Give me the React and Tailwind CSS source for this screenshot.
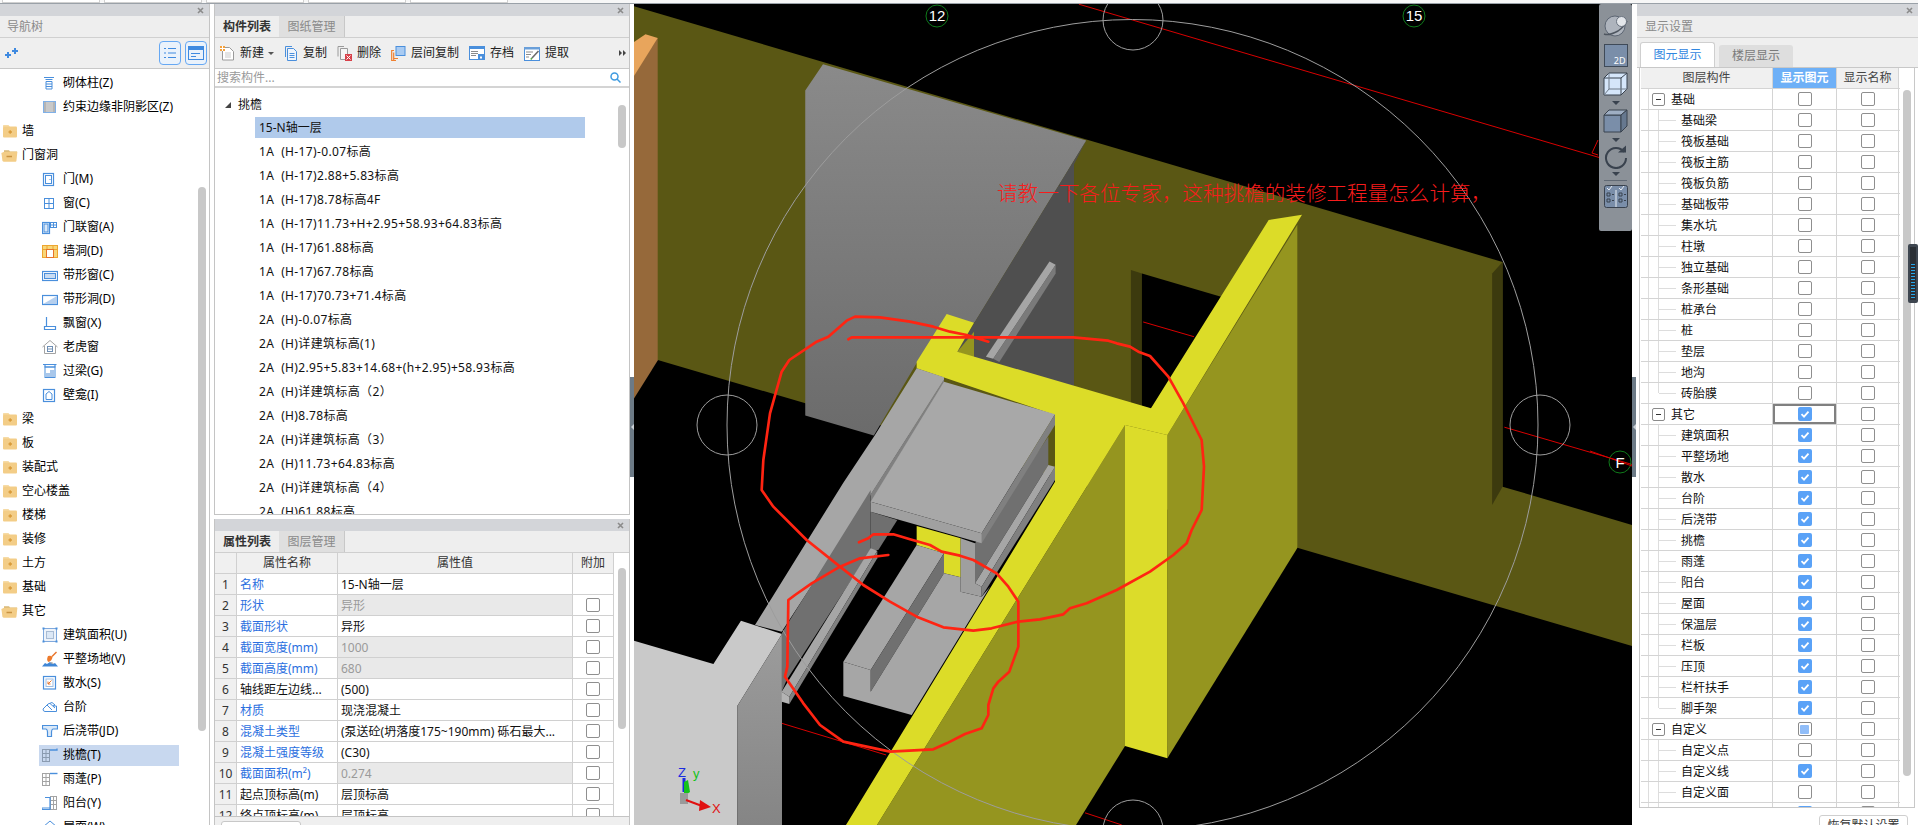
import React from 'react';

const B = '#4a8fdc';
const G = '#a3a3a3';

const FolderClosed = () => (
  <svg width="16" height="14" viewBox="0 0 16 14" className="shrink-0">
    <path d="M1 3 L1 1.5 Q1 1 1.6 1 L6.5 1 L8 3 Z" fill="#f6dba6" />
    <rect x="1" y="2.5" width="14" height="11" rx="1" fill="#f3cd87" />
    <path d="M6.5 8 H10 M8.2 6.2 V9.8" stroke="#d99a3a" strokeWidth="1.4" />
  </svg>
);

const FolderOpen = () => (
  <svg width="17" height="13" viewBox="0 0 17 13" className="shrink-0">
    <path d="M3 3 V1.2 H8 L9 2.4 H16 V3 Z" fill="#d9b877" />
    <path d="M3.2 2.8 H16.4 L15.4 12 Q15.3 12.8 14.5 12.8 H3 Q1.8 12.8 1.4 11.8 L0.4 4 Z" fill="#f3cd87" />
    <path d="M5.5 7.5 H11" stroke="#c99341" strokeWidth="1.5" />
  </svg>
);

const TreeIcon = ({ name }) => {
  const common = { width: 16, height: 16, viewBox: '0 0 16 16', fill: 'none', stroke: B, strokeWidth: 1, className: 'shrink-0' };
  switch (name) {
    case 'column':
      return (
        <svg {...common}>
          <path d="M2 2.5 H12 M3.5 4.5 H10.5 M4 6.5 H10 V14 H4 Z M4 9 H10 M4 11.5 H10" />
        </svg>
      );
    case 'hatch':
      return (
        <svg {...common}>
          <rect x="1.5" y="2.5" width="12" height="11" fill="#b5b5b5" stroke="#7fb0e8" />
          <rect x="4" y="3" width="7" height="10" fill="#c9c9c9" stroke="none" />
        </svg>
      );
    case 'door':
      return (
        <svg {...common}>
          <rect x="1.5" y="2.5" width="10" height="12" strokeWidth="1.2" />
          <rect x="3.5" y="4.5" width="6" height="8" />
          <path d="M7.5 8.5 H8.5" />
        </svg>
      );
    case 'window':
      return (
        <svg {...common}>
          <rect x="2.5" y="3.5" width="9" height="10" />
          <path d="M7 3.5 V13.5 M2.5 8.5 H11.5" />
        </svg>
      );
    case 'doorwin':
      return (
        <svg {...common}>
          <rect x="0.5" y="3.5" width="7" height="11" strokeWidth="1.2" />
          <rect x="2" y="5" width="4" height="8" fill="#dbe9f8" />
          <rect x="8.5" y="3.5" width="6" height="5" />
          <path d="M11.5 3.5 V8.5 M8.5 6 H14.5" />
        </svg>
      );
    case 'wallhole':
      return (
        <svg {...common}>
          <rect x="0.5" y="2.5" width="15" height="12" fill="#f8d77a" stroke="#eda630" />
          <path d="M0.5 6.5 H15.5 M5 2.5 V14 M11 2.5 V14" stroke="#eda630" />
          <rect x="4.5" y="6.5" width="7" height="8" fill="#fff" stroke="#e8742b" />
        </svg>
      );
    case 'bandwin':
      return (
        <svg {...common}>
          <rect x="0.5" y="4.5" width="15" height="9" strokeWidth="1.2" />
          <rect x="2.5" y="6.5" width="11" height="5" fill="#c8dcf3" />
        </svg>
      );
    case 'bandhole':
      return (
        <svg {...common}>
          <rect x="0.5" y="4.5" width="15" height="9" strokeWidth="1.2" />
          <path d="M1 13 L15 5 V13 Z" fill="#b5cfee" stroke="none" />
        </svg>
      );
    case 'bay':
      return (
        <svg {...common}>
          <path d="M4.5 2 V11.5 H13 M2.5 11.5 H13.5 V14.5 H2.5 Z" strokeWidth="1.2" />
        </svg>
      );
    case 'dormer':
      return (
        <svg {...common}>
          <path d="M0.5 8 L8 1.5 L15.5 8 M2.5 7 V14.5 H13.5 V7" stroke={G} />
          <rect x="5.5" y="7.5" width="5" height="5" stroke="#6f8fb5" />
          <path d="M5.5 10 H10.5" stroke="#6f8fb5" />
        </svg>
      );
    case 'lintel':
      return (
        <svg {...common}>
          <path d="M1 1.5 H14.5 M3 1.5 H13 V4 H3 Z" strokeWidth="1.2" />
          <rect x="3" y="4" width="10" height="10.5" />
          <path d="M4 14 V10 H8 V7 H12.5 V14 Z" fill="#a9c7ea" stroke="none" />
        </svg>
      );
    case 'niche':
      return (
        <svg {...common}>
          <rect x="1.5" y="2.5" width="11" height="12" strokeWidth="1.2" />
          <path d="M4 12.5 V7 L7 4.5 L10 7 V12.5 Z" />
        </svg>
      );
    case 'area':
      return (
        <svg {...common}>
          <rect x="1.5" y="1.5" width="13" height="13" fill="#eef3fa" stroke="#7fa8dc" />
          <rect x="4.5" y="4.5" width="7" height="7" fill="#dce8f6" stroke="#a9bcd4" />
          <path d="M0.5 0.5 H2.5 V2.5 H0.5 Z M13.5 0.5 H15.5 V2.5 H13.5 Z M0.5 13.5 H2.5 V15.5 H0.5 Z M13.5 13.5 H15.5 V15.5 H13.5 Z" fill={B} stroke="none" />
        </svg>
      );
    case 'shovel':
      return (
        <svg {...common}>
          <path d="M0 15.5 L3 12 L5 13 L8 11 L11 13 L13 12 L16 15.5 Z" fill="#3f86d6" stroke="none" />
          <path d="M7 12 L12 13 L10 11 Z" fill="#a8a8a8" stroke="none" />
          <path d="M14.5 1 L10 5.5" stroke="#e8742b" strokeWidth="1.4" />
          <path d="M6 5 Q9 4 10.5 6 Q10 10 6.5 11 Q4 9 6 5 Z" fill="#ed7a2c" stroke="none" />
        </svg>
      );
    case 'apron':
      return (
        <svg {...common}>
          <rect x="1.5" y="1.5" width="12" height="12.5" strokeWidth="1.2" />
          <rect x="4" y="4" width="7" height="7.5" stroke="#9dbde3" />
          <path d="M9.5 5.5 L6 9 M6 6.5 V9 H8.5" stroke="#e8742b" />
        </svg>
      );
    case 'steps':
      return (
        <svg {...common}>
          <path d="M1 10 L6 5 L10 3.5 L13 6 L11 7 H14.5 V12.5 H3 Q1 12.5 1 10 Z" />
          <path d="M5 6 L10 11 M8 4.5 L13 9" />
        </svg>
      );
    case 'pour':
      return (
        <svg {...common}>
          <path d="M0.5 2.5 H15.5 V6 H11 Q9.5 6.5 9.5 9 V13.5 H5.5 V9 Q5.5 6.5 4 6 H0.5 Z" fill="#dbe9f8" strokeWidth="1.2" />
        </svg>
      );
    case 'eave':
      return (
        <svg {...common}>
          <rect x="0.5" y="2.5" width="7" height="12" stroke="#8a9bb0" />
          <path d="M0.5 6.5 H7.5 M0.5 10.5 H7.5 M4 2.5 V14.5" stroke="#8a9bb0" />
          <path d="M8 3 H15 V1.5" stroke={B} strokeWidth="1.3" />
        </svg>
      );
    case 'canopy':
      return (
        <svg {...common}>
          <rect x="0.5" y="2.5" width="7" height="12" stroke={G} />
          <path d="M0.5 6.5 H7.5 M0.5 10.5 H7.5 M4 2.5 V14.5" stroke={G} />
          <path d="M8 2.5 H15.5" stroke={B} strokeWidth="1.4" />
        </svg>
      );
    case 'balcony':
      return (
        <svg {...common}>
          <rect x="8.5" y="1.5" width="6" height="13" stroke={G} />
          <path d="M8.5 5.5 H14.5 M8.5 9.5 H14.5 M11.5 1.5 V14.5" stroke={G} />
          <path d="M3 2.5 H8 V12.5 M0 13 H8 V14.5 H0 Z" strokeWidth="1.2" />
        </svg>
      );
    case 'roof':
      return (
        <svg {...common}>
          <path d="M1 8 L8 2 L15 8 M3 8 V14 H13 V8" />
        </svg>
      );
    default:
      return null;
  }
};

const navRows = [
  ['砌体柱(Z)', 'column'],
  ['约束边缘非阴影区(Z)', 'hatch'],
  ['墙', 'closed'],
  ['门窗洞', 'open'],
  ['门(M)', 'door'],
  ['窗(C)', 'window'],
  ['门联窗(A)', 'doorwin'],
  ['墙洞(D)', 'wallhole'],
  ['带形窗(C)', 'bandwin'],
  ['带形洞(D)', 'bandhole'],
  ['飘窗(X)', 'bay'],
  ['老虎窗', 'dormer'],
  ['过梁(G)', 'lintel'],
  ['壁龛(I)', 'niche'],
  ['梁', 'closed'],
  ['板', 'closed'],
  ['装配式', 'closed'],
  ['空心楼盖', 'closed'],
  ['楼梯', 'closed'],
  ['装修', 'closed'],
  ['土方', 'closed'],
  ['基础', 'closed'],
  ['其它', 'open'],
  ['建筑面积(U)', 'area'],
  ['平整场地(V)', 'shovel'],
  ['散水(S)', 'apron'],
  ['台阶', 'steps'],
  ['后浇带(JD)', 'pour'],
  ['挑檐(T)', 'eave', true],
  ['雨蓬(P)', 'canopy'],
  ['阳台(Y)', 'balcony'],
  ['屋面(W)', 'roof'],
];

const members = [
  '1A  (H-17)-0.07标高',
  '1A  (H-17)2.88+5.83标高',
  '1A  (H-17)8.78标高4F',
  '1A  (H-17)11.73+H+2.95+58.93+64.83标高',
  '1A  (H-17)61.88标高',
  '1A  (H-17)67.78标高',
  '1A  (H-17)70.73+71.4标高',
  '2A  (H)-0.07标高',
  '2A  (H)详建筑标高(1)',
  '2A  (H)2.95+5.83+14.68+(h+2.95)+58.93标高',
  '2A  (H)详建筑标高（2）',
  '2A  (H)8.78标高',
  '2A  (H)详建筑标高（3）',
  '2A  (H)11.73+64.83标高',
  '2A  (H)详建筑标高（4）',
  '2A  (H)61.88标高',
];

// name, value, blue name, grey value, has checkbox
const props = [
  ['名称', '15-N轴一层', true, false, false],
  ['形状', '异形', true, true, true],
  ['截面形状', '异形', true, false, true],
  ['截面宽度(mm)', '1000', true, true, true],
  ['截面高度(mm)', '680', true, true, true],
  ['轴线距左边线...', '(500)', false, false, true],
  ['材质', '现浇混凝土', true, false, true],
  ['混凝土类型', '(泵送砼(坍落度175~190mm) 砾石最大...', true, false, true],
  ['混凝土强度等级', '(C30)', true, false, true],
  ['截面面积(m²)', '0.274', true, true, true],
  ['起点顶标高(m)', '层顶标高', false, false, true],
  ['终点顶标高(m)', '层顶标高', false, false, true],
];

const layerRows = [
  { name: '基础', group: true },
  ...['基础梁', '筏板基础', '筏板主筋', '筏板负筋', '基础板带', '集水坑', '柱墩', '独立基础', '条形基础', '桩承台', '桩', '垫层', '地沟'].map((name) => ({ name })),
  { name: '砖胎膜', last: true },
  { name: '其它', group: true, on: true, focus: true },
  ...['建筑面积', '平整场地', '散水', '台阶', '后浇带', '挑檐', '雨蓬', '阳台', '屋面', '保温层', '栏板', '压顶', '栏杆扶手'].map((name) => ({ name, on: true })),
  { name: '脚手架', on: true, last: true },
  { name: '自定义', group: true, partial: true },
  { name: '自定义点' },
  { name: '自定义线', on: true },
  { name: '自定义面' },
  { name: '', on: true },
];

const Check = ({ on, partial, size = 'w-[14px] h-[14px]' }) => {
  if (on) {
    return (
      <span className={`${size} rounded-[2px] bg-[#5aa2f7] flex items-center justify-center shrink-0`}>
        <svg width="10" height="10" viewBox="0 0 10 10" fill="none" stroke="#fff" strokeWidth="1.8">
          <path d="M1.5 5.2 L4 7.6 L8.5 2.6" />
        </svg>
      </span>
    );
  }
  if (partial) {
    return (
      <span className={`${size} rounded-[2px] border border-[#8a8a8a] bg-white p-[1.5px] shrink-0`}>
        <span className="block w-full h-full rounded-[1px] bg-[#90bdf8]" />
      </span>
    );
  }
  return <span className={`${size} rounded-[2px] border border-[#8f8f8f] bg-white shrink-0`} />;
};

const Close = () => (
  <div className="h-[12px] bg-[#d3d5d9] flex items-center justify-end pr-[5px] shrink-0">
    <svg width="7" height="7" viewBox="0 0 7 7" stroke="#8b8b8b" strokeWidth="1.6">
      <path d="M1 1 L6 6 M6 1 L1 6" />
    </svg>
  </div>
);

const Scroll = ({ className }) => <div className={`absolute w-[8px] rounded-full bg-[#c8c8c8] ${className}`} />;

const NavPanel = () => (
  <aside className="w-[210px] shrink-0 border-r border-[#c4c4c4] flex flex-col bg-white relative overflow-hidden">
    <Close />
    <div className="h-[22px] bg-[#eeeeee] border-b border-[#d0d0d0] flex items-center pl-[7px] text-[12px] text-[#8a8a8a] shrink-0">导航树</div>
    <div className="h-[31px] bg-[#efefef] border-b border-[#c8c8c8] flex items-center pl-[5px] pr-[2px] shrink-0">
      <svg width="13" height="11" viewBox="0 0 13 11" fill="#3f8ae0">
        <path d="M2 4 H4 V6 H6 V8 H4 V10 H2 V8 H0 V6 H2 Z" />
        <path d="M9 0 H11 V2 H13 V4 H11 V6 H9 V4 H7 V2 H9 Z" />
      </svg>
      <div className="ml-auto flex gap-[4px]">
        <div className="w-[22px] h-[24px] rounded-[4px] border border-[#66a8f3] bg-[#eaf2fb] flex items-center justify-center">
          <svg width="14" height="14" viewBox="0 0 14 14" fill="none" stroke="#3f8ae0">
            <path d="M1 2.5 H3 M5 2.5 H13 M1 7 H3 M5 7 H13 M1 11.5 H3 M5 11.5 H13" />
          </svg>
        </div>
        <div className="w-[22px] h-[24px] rounded-[4px] border border-[#66a8f3] bg-[#eaf2fb] flex items-center justify-center">
          <svg width="16" height="14" viewBox="0 0 16 14" fill="none" stroke="#3f8ae0">
            <rect x="0.5" y="0.5" width="15" height="13" />
            <rect x="1" y="1" width="14" height="3" fill="#3f8ae0" stroke="none" />
            <path d="M3 7.5 H12 M3 10.5 H8" />
          </svg>
        </div>
      </div>
    </div>
    <div className="pt-[2px] text-[12px] text-black">
      {navRows.map(([label, icon, selected]) => {
        const folder = icon === 'closed' || icon === 'open';
        return (
          <div key={label} className="h-[24px] flex items-center">
            {folder ? (
              <div className="flex items-center pl-[1px]">
                <span className="w-[17px] flex justify-center">{icon === 'closed' ? <FolderClosed /> : <FolderOpen />}</span>
                <span className="ml-[4px]">{label}</span>
              </div>
            ) : (
              <div className={`ml-[39px] w-[140px] h-[21px] flex items-center pl-[3px] ${selected ? 'bg-[#c8d8ef]' : ''}`}>
                <TreeIcon name={icon} />
                <span className="ml-[5px]">{label}</span>
              </div>
            )}
          </div>
        );
      })}
    </div>
    <Scroll className="left-[198px] top-[183px] h-[544px]" />
  </aside>
);

const ToolIcon = ({ name }) => {
  switch (name) {
    case 'new':
      return (
        <svg width="15" height="15" viewBox="0 0 15 15" fill="none">
          <path d="M2.5 1.5 H9.5 L13.5 5.5 V14 H2.5 Z" fill="#fff" stroke="#9a9a9a" />
          <path d="M5 7 H11 M5 9 H11 M5 11 H11" stroke="#c9c9c9" />
          <rect x="0" y="0" width="5" height="5" fill="#f5a13c" />
          <path d="M0 2.5 H5 M2.5 0 V5" stroke="#fff" />
        </svg>
      );
    case 'copy':
      return (
        <svg width="14" height="15" viewBox="0 0 14 15" fill="none" stroke="#4a8fdc">
          <path d="M1.5 11 V0.5 H8" />
          <path d="M3.5 2.5 H9.5 L12.5 5.5 V14.5 H3.5 Z" fill="#eef4fc" />
          <path d="M5.5 7.5 H10.5 M5.5 9.5 H10.5 M5.5 11.5 H10.5" />
        </svg>
      );
    case 'delete':
      return (
        <svg width="15" height="15" viewBox="0 0 15 15" fill="none" stroke="#9a9a9a">
          <path d="M1 10.5 V0.5 H7" />
          <path d="M3.5 2.5 H10.5 V13.5 H3.5 Z" fill="#f5f5f5" />
          <rect x="8" y="8" width="7" height="7" fill="#d8414a" stroke="none" />
          <path d="M9.5 9.5 L13.5 13.5 M13.5 9.5 L9.5 13.5" stroke="#fff" />
        </svg>
      );
    case 'floorcopy':
      return (
        <svg width="15" height="15" viewBox="0 0 15 15" fill="none">
          <path d="M0.7 15 V4.5 H3 M2.7 15 V6.5" stroke="#f08030" strokeWidth="1.2" />
          <path d="M0.7 14.5 H5 M2.7 12.5 H7" stroke="#f08030" strokeWidth="1.2" />
          <rect x="5" y="0.5" width="9" height="9" fill="#a9cbf2" stroke="#4a8fdc" />
        </svg>
      );
    case 'save':
      return (
        <svg width="16" height="15" viewBox="0 0 16 15" fill="none">
          <rect x="0.5" y="0.5" width="15" height="13" fill="#fff" stroke="#4a8fdc" />
          <rect x="0" y="0" width="16" height="3" fill="#4a8fdc" />
          <path d="M2 5.5 H9 M2 7.5 H9 M2 9.5 H7" stroke="#8b8b8b" />
          <rect x="9" y="8" width="6" height="6" fill="#4a8fdc" />
          <rect x="11" y="10.5" width="2" height="2" fill="#fff" />
        </svg>
      );
    case 'extract':
      return (
        <svg width="16" height="15" viewBox="0 0 16 15" fill="none">
          <rect x="0.5" y="1.5" width="15" height="13" fill="#fff" stroke="#4a8fdc" />
          <rect x="0" y="1" width="16" height="2.5" fill="#6a9fd9" />
          <path d="M2 6 H9 M2 8.5 H7 M2 11 H5" stroke="#8b8b8b" />
          <path d="M14.5 5 L8 12" stroke="#6b6b6b" strokeWidth="1.6" />
          <path d="M8 12 L6.8 13.4" stroke="#58a84b" strokeWidth="1.6" />
        </svg>
      );
    default:
      return null;
  }
};

const Tabs = ({ active, other }) => (
  <div className="h-[22px] bg-[#eeeeee] border-b border-[#cfcfcf] flex text-[12px] shrink-0">
    <div className="w-[64px] flex items-center justify-center font-bold text-[#333]">{active}</div>
    <div className="w-[66px] flex items-center justify-center bg-[#dfdfdf] text-[#8a8a8a] border-r border-[#c8c8c8]">{other}</div>
  </div>
);

const Tool = ({ icon, label, caret }) => (
  <div className="flex items-center gap-[5px]">
    <ToolIcon name={icon} />
    <span>{label}</span>
    {caret && <span className="ml-[-1px] w-0 h-0 border-x-[3px] border-x-transparent border-t-[3px] border-t-[#555]" />}
  </div>
);

const MiddlePanel = () => (
  <section className="w-[416px] shrink-0 ml-[4px] flex flex-col">
    <div className="h-[511px] border-x border-b border-[#c4c4c4] flex flex-col overflow-hidden relative bg-white">
      <Close />
      <Tabs active="构件列表" other="图纸管理" />
      <div className="h-[31px] bg-[#efefef] border-b border-[#c9c9c9] flex items-center pl-[5px] pr-[3px] gap-[10px] text-[12px] text-[#222] shrink-0">
        <Tool icon="new" label="新建" caret />
        <Tool icon="copy" label="复制" />
        <Tool icon="delete" label="删除" />
        <Tool icon="floorcopy" label="层间复制" />
        <Tool icon="save" label="存档" />
        <Tool icon="extract" label="提取" />
        <span className="ml-auto flex gap-[1px]">
          <span className="w-0 h-0 border-y-[3px] border-y-transparent border-l-[3px] border-l-[#444]" />
          <span className="w-0 h-0 border-y-[3px] border-y-transparent border-l-[3px] border-l-[#444]" />
        </span>
      </div>
      <div className="h-[19px] bg-white border-b-2 border-[#d4d4d4] flex items-center pl-[2px] pr-[8px] text-[12px] text-[#9a9a9a] shrink-0">
        <span>搜索构件...</span>
        <svg className="ml-auto" width="11" height="11" viewBox="0 0 11 11" fill="none" stroke="#3f9be0" strokeWidth="1.5">
          <circle cx="4.5" cy="4.5" r="3.5" />
          <path d="M7 7 L10.5 10.5" />
        </svg>
      </div>
      <div className="text-[12px] text-[#111] pt-[4px]">
        <div className="h-[25px] flex items-center pl-[10px]">
          <span className="w-0 h-0 border-l-[6px] border-l-transparent border-b-[6px] border-b-[#444]" />
          <span className="ml-[7px]">挑檐</span>
        </div>
        <div className="ml-[40px] w-[330px] h-[21px] bg-[#b0caeb] flex items-center pl-[4px] mb-[2px]">15-N轴一层</div>
        {members.map((m) => (
          <div key={m} className="h-[24px] flex items-center pl-[44px] whitespace-pre tracking-[0.35px]">{m}</div>
        ))}
      </div>
      <Scroll className="left-[403px] top-[101px] h-[43px]" />
    </div>
    <div className="h-[4px] shrink-0" />
    <div className="flex-1 min-h-0 border-x border-[#c4c4c4] flex flex-col bg-white relative overflow-hidden">
      <Close />
      <Tabs active="属性列表" other="图层管理" />
      <div className="h-[264px] text-[12px] overflow-hidden shrink-0 border-b border-[#c4c4c4]">
        <div className="grid grid-cols-[22px_101px_235px_41px] w-[399px] h-[21px] bg-[#f0f0f0] text-[#333]">
          <div className="border-r border-b border-[#d0d0d0]" />
          <div className="border-r border-b border-[#d0d0d0] flex items-center justify-center">属性名称</div>
          <div className="border-r border-b border-[#d0d0d0] flex items-center justify-center">属性值</div>
          <div className="border-r border-b border-[#d0d0d0] flex items-center justify-center">附加</div>
        </div>
        {props.map(([name, value, blue, grey, box], i) => (
          <div key={name} className="grid grid-cols-[22px_101px_235px_41px] w-[399px] h-[21px]">
            <div className="border-r border-b border-[#d0d0d0] bg-[#f0f0f0] flex items-center justify-center pt-[1px] text-[#333]">{i + 1}</div>
            <div className={`border-r border-b border-[#d0d0d0] flex items-center pl-[3px] pt-[1px] whitespace-nowrap overflow-hidden ${blue ? 'text-[#2b6fe0]' : 'text-[#111]'}`}>{name}</div>
            <div className={`border-r border-b border-[#d0d0d0] flex items-center pl-[3px] pt-[1px] whitespace-nowrap overflow-hidden ${grey ? 'bg-[#e9e9e9] text-[#9a9a9a]' : 'text-[#111]'}`}>{value}</div>
            <div className="border-r border-b border-[#d0d0d0] flex items-center justify-center">{box && <Check />}</div>
          </div>
        ))}
      </div>
      <div className="flex-1 bg-[#efefef] pl-[6px] pt-[4px]">
        <div className="w-[80px] h-[8px] bg-white border border-[#c8c8c8] rounded-t-[3px]" />
      </div>
      <Scroll className="left-[403px] top-[49px] h-[161px]" />
    </div>
  </section>
);

const Toolbar = () => (
  <div className="absolute right-0 top-0 w-[33px] h-[227px] bg-[#8b9198] rounded-[2px] flex flex-col items-center pt-[11px]">
    <svg width="25" height="22" viewBox="0 0 25 22">
      <ellipse cx="12" cy="11" rx="10" ry="10" fill="#aeb4bd" stroke="#5d6673" />
      <path d="M1 19 Q6 21 15 16 Q22 11 24 6" fill="none" stroke="#4e5660" strokeWidth="1.5" />
      <circle cx="18.5" cy="6.5" r="5" fill="#e3e6ea" stroke="#6b7480" />
    </svg>
    <div className="mt-[7px] w-[24px] h-[23px] bg-[#7a8ea9] border border-[#3f4a58] flex items-end justify-end pr-[1px] text-[9px] leading-[11px] text-white">2D</div>
    <svg className="mt-[5px]" width="25" height="24" viewBox="0 0 25 24" fill="none" stroke="#39424e">
      <path d="M1 6 L6 1 H24 V17 L18 23 H1 Z" fill="#d5e6fa" />
      <path d="M1 6 H18 V23 M18 6 L24 1" />
      <path d="M6 1 V17 H24 M6 17 L1 23" stroke="#6e7a88" />
    </svg>
    <span className="mt-[5px] w-0 h-0 border-x-[4px] border-x-transparent border-t-[4px] border-t-[#39424e]" />
    <svg className="mt-[4px]" width="25" height="24" viewBox="0 0 25 24" stroke="#39424e">
      <path d="M1 6 H18 V23 H1 Z" fill="#7a8ea9" />
      <path d="M1 6 L6 1 H24 L18 6 Z" fill="#9eaec3" />
      <path d="M18 6 L24 1 V17 L18 23 Z" fill="#66788f" />
    </svg>
    <span className="mt-[5px] w-0 h-0 border-x-[4px] border-x-transparent border-t-[4px] border-t-[#39424e]" />
    <svg className="mt-[3px]" width="24" height="24" viewBox="0 0 24 24" fill="none" stroke="#39424e" strokeWidth="2">
      <path d="M20 7 A10 10 0 1 0 22 13" />
      <path d="M14 7.5 H22 V0.5 Z" fill="#39424e" stroke="none" />
    </svg>
    <span className="mt-[3px] w-0 h-0 border-x-[4px] border-x-transparent border-t-[4px] border-t-[#39424e]" />
    <div className="mt-[4px] w-[23px] h-px bg-[#606974]" />
    <svg className="mt-[4px]" width="24" height="23" viewBox="0 0 24 23" fill="#7a8ea9" stroke="#39424e">
      <rect x="0.5" y="0.5" width="23" height="22" rx="2" />
      <path d="M12 5 V22 M3 3 L5 5 L8 1 M15 3 L17 5 L20 1" fill="none" stroke="#e8edf3" />
      <path d="M3 8 H6 V11 H3 Z M3 14 H6 V17 H3 Z M15 8 H18 V11 H15 Z M15 14 H18 V17 H15 Z M8 9.5 H10 M8 15.5 H10 M20 9.5 H22 M20 15.5 H22" fill="none" />
    </svg>
  </div>
);

// polygons below are in the zoomed coordinates I measured them in, the groups map them back to screen
const Scene = () => (
  <svg className="block w-full h-full" viewBox="634 4 998 821">
    <defs>
      <linearGradient id="wallGrey" x1="0" y1="0" x2="0" y2="1">
        <stop offset="0" stopColor="#8a8a8a" />
        <stop offset="1" stopColor="#6b6b6b" />
      </linearGradient>
      <linearGradient id="colSide" x1="0" y1="0" x2="0" y2="1">
        <stop offset="0" stopColor="#9c9c9c" />
        <stop offset="1" stopColor="#858585" />
      </linearGradient>
    </defs>
    <rect x="634" y="4" width="998" height="821" fill="#000" />
    <g transform="translate(632 0) scale(0.6122 0.5261)">
      <polygon points="3,12 1422,498 1422,925 1640,1000 1640,1230 3,671" fill="#5a5714" />
      <polygon points="312,122 742,267 560,612 465,690 395,828 283,790 283,172" fill="url(#wallGrey)" />
      <polygon points="742,267 722,312 722,740 530,670 560,612" fill="#4f4f4f" />
      <polygon points="682,497 692,503 590,682 578,678" fill="#a6a6a6" />
      <polygon points="692,503 692,520 600,688 590,682" fill="#7a7a7a" />
      <polygon points="815,513 833,520 833,772 815,766" fill="#3c3a0e" />
      <polygon points="833,520 965,565 848,777 833,772" fill="#000" />
      <polygon points="1405,520 1422,498 1422,925 1405,960" fill="#3c3a0e" />
      <polygon points="3,145 22,72 42,72 42,685 3,758" fill="#96693a" />
      <polygon points="3,80 22,65 42,72 3,145" fill="#e8a55c" />
      <polygon points="3,1218 133,1262 178,1180 245,1205 172,1342 172,1568 3,1568" fill="#c9c9c9" />
      <polygon points="245,1205 245,1568 172,1568 172,1342" fill="url(#colSide)" />
      <g stroke="#d80000" fill="none">
        <path d="M730 8 L1640 320" vectorEffect="non-scaling-stroke" />
        <path d="M1425 812 L1640 885" vectorEffect="non-scaling-stroke" />
        <path d="M245 1375 L415 1435" vectorEffect="non-scaling-stroke" />
        <path d="M740 1545 L800 1568" vectorEffect="non-scaling-stroke" />
        <path d="M835 612 L918 640" vectorEffect="non-scaling-stroke" />
      </g>
    </g>
    <path d="M1598 140 L1592 153 L1598 155" fill="none" stroke="#d80000" />
    <g transform="translate(740 300) scale(0.33333)">
      <polygon points="1282,405 1672,-226 1672,744 1282,1375" fill="#95951f" />
      <polygon points="702,95 702,175 652,155" fill="#95951f" />
      <polygon points="1155,375 1155,1338 1008,1575 411,1575" fill="#95951f" />
      <polygon points="1155,375 1282,405 1282,1375 1155,1338" fill="#dcdc2a" />
      <polygon points="530,205 530,185 620,42 702,68 652,155 1233,325 1586,-240 1686,-256 1282,405 1155,375 411,1575 318,1575 945,545 945,345" fill="#dcdc28" />
      <polygon points="530,678 662,715 662,832 612,820 612,760 530,735" fill="#dcdc28" />
      <polygon points="530,205 612,232 612,240 392,585 125,995 45,975 310,548 405,405" fill="#a6a6a6" />
      <polygon points="612,238 612,250 392,610 392,583" fill="#808080" />
      <polygon points="392,570 392,750 140,1140 125,1175 125,1000" fill="#707070" />
      <polygon points="392,635 472,660 415,750 392,750" fill="#6f6f6f" />
      <polygon points="392,745 412,752 148,1190 125,1175" fill="#a6a6a6" />
      <polygon points="412,752 412,775 148,1212 148,1190" fill="#808080" />
      <polygon points="125,1175 148,1190 148,1212 125,1205" fill="#b4b4b4" />
      <polygon points="530,735 612,760 392,1110 310,1085" fill="#a6a6a6" />
      <polygon points="612,760 612,820 392,1175 392,1110" fill="#707070" />
      <polygon points="612,820 662,832 662,875 725,890 750,860 515,1245 310,1188 310,1085 392,1110 392,1175" fill="#a6a6a6" />
      <polygon points="925,410 925,495 705,850 705,730" fill="#707070" />
      <polygon points="662,715 705,730 705,850 725,860 725,890 662,875" fill="#9f9f9f" />
      <polygon points="925,495 945,500 725,860 705,850" fill="#a6a6a6" />
      <polygon points="945,500 945,540 725,890 725,860" fill="#808080" />
      <polygon points="612,245 945,343 725,700 392,605" fill="#a8a8a8" />
      <polygon points="945,343 945,375 725,730 725,700" fill="#808080" />
      <polygon points="392,605 725,700 725,730 392,635" fill="#a0a0a0" />
    </g>
    <g fill="none" stroke="#9d9d9d">
      <circle cx="1132.5" cy="425" r="405.5" />
      <circle cx="727" cy="425" r="30" />
      <circle cx="1540" cy="425" r="30" />
      <circle cx="1133" cy="20" r="30" />
      <circle cx="1133" cy="830" r="30" />
    </g>
    <g fill="none" stroke="#0f7a1a">
      <circle cx="937" cy="16" r="11" />
      <circle cx="1414" cy="16" r="11" />
      <circle cx="1620" cy="462" r="11" />
    </g>
    <path d="M1590 451 L1632 466" stroke="#d80000" />
    <g fill="#fff" fontSize="15" textAnchor="middle" fontFamily="Liberation Sans, sans-serif">
      <text x="937" y="21">12</text>
      <text x="1414" y="21">15</text>
      <text x="1620" y="468">F</text>
    </g>
    <g transform="translate(740 300) scale(0.33333)" fill="none" stroke="#ff2412" strokeWidth="8" strokeLinejoin="round" strokeLinecap="round">
      <polyline points="325,118 335,112 700,112 1000,112 1105,122 1130,130 1170,140 1195,155 1230,168 1285,230 1330,310 1385,420 1392,500 1385,630 1355,690 1340,730 1300,765 1230,815 1130,870 1040,910 990,925 970,943 900,958 835,965 755,985 700,992 610,982 530,950 450,905 370,855 300,800 200,720 100,620 65,570 70,480 90,340 125,215 148,180 230,125 265,110 320,62 345,50 420,52 510,65 580,80 630,95 680,105 745,125" />
      <polyline points="357,727 385,715 400,703 460,703 510,718 570,735 605,755 660,767 700,780 770,820 805,860 835,905 835,1040 808,1115 775,1145 760,1165 745,1215 745,1245 725,1285 675,1302 620,1330 580,1348 450,1355 310,1325 240,1275 190,1210 135,1130 142,1100 145,900 165,885 215,850 300,800 360,775 445,765" />
    </g>
    <g>
      <path d="M684 778 V792" stroke="#1a2be0" strokeWidth="3" />
      <path d="M684 782 L688 780 L690 792 L684 796 Z" fill="#15c21a" />
      <rect x="680" y="793" width="8" height="11" fill="#9a9a9a" />
      <path d="M686 800 L702 806" stroke="#e01010" strokeWidth="2" />
      <path d="M700 800 L711 807 L699 811 Z" fill="#e01010" />
      <text x="678" y="777" fontSize="13" fill="#1a2be0" fontFamily="Liberation Sans, sans-serif">Z</text>
      <text x="693" y="778" fontSize="13" fill="#15c21a" fontFamily="Liberation Sans, sans-serif">y</text>
      <text x="712" y="813" fontSize="13" fill="#e01010" fontFamily="Liberation Sans, sans-serif">X</text>
    </g>
  </svg>
);

const Splitter = () => (
  <div className="w-[4px] shrink-0 bg-white pt-[373px]">
    <div className="h-[100px] bg-[#6c7a86] flex items-center justify-center">
      <span className="w-0 h-0 border-y-[3px] border-y-transparent border-r-[3px] border-r-[#c9d0d6]" />
    </div>
  </div>
);

const DisplayPanel = () => (
  <aside className="w-[281px] shrink-0 bg-white flex flex-col relative overflow-hidden">
    <Close />
    <div className="h-[22px] bg-[#eeeeee] border-b border-[#d0d0d0] flex items-center pl-[8px] text-[12px] text-[#8a8a8a] shrink-0">显示设置</div>
    <div className="h-[30px] pl-[3px] flex items-end gap-[4px] bg-[#efefef] border-b border-[#c8c8c8] text-[12px] shrink-0">
      <div className="w-[75px] h-[25px] rounded-t-[3px] border border-b-0 border-[#cfcfcf] bg-white text-[#2f86e0] flex items-center justify-center">图元显示</div>
      <div className="w-[74px] h-[22px] rounded-t-[3px] bg-[#dedede] text-[#7a7a7a] flex items-center justify-center">楼层显示</div>
    </div>
    <div className="ml-[2px] w-[276px] h-[740px] border border-t-0 border-[#c8c8c8] relative overflow-hidden text-[12px] text-[#111] shrink-0">
      <div className="grid grid-cols-[132px_63px_63px] w-[259px] ml-[1px] h-[21px] border-b border-[#d4d4d4]">
        <div className="bg-[#f0f0f0] border-r border-[#d4d4d4] flex items-center justify-center text-[#444]">图层构件</div>
        <div className="bg-[#6eb0f7] text-white font-bold flex items-center justify-center">显示图元</div>
        <div className="bg-[#f0f0f0] border-x border-[#d4d4d4] flex items-center justify-center text-[#444]">显示名称</div>
      </div>
      {layerRows.map((r, i) => (
        <div key={i} className="grid grid-cols-[132px_63px_63px] w-[259px] ml-[1px] h-[21px] border-b border-[#d4d4d4]">
          <div className="border-r border-[#d4d4d4] flex items-center h-full">
            <span className="w-[7px] shrink-0" />
            <span className="w-px h-full bg-[#dddddd] shrink-0" />
            {r.group ? (
              <>
                <span className="ml-[3px] w-[13px] h-[13px] rounded-[2px] border border-[#8a8a8a] bg-white flex items-center justify-center shrink-0">
                  <span className="w-[5px] h-px bg-[#333]" />
                </span>
                <span className="ml-[6px] pt-[1px]">{r.name}</span>
              </>
            ) : (
              <>
                <span className="w-[9px] shrink-0" />
                <span className={`w-px bg-[#dddddd] shrink-0 ${r.last ? 'h-1/2 self-start' : 'h-full'}`} />
                <span className="w-[17px] h-px bg-[#dddddd] shrink-0" />
                <span className="ml-[5px] pt-[1px]">{r.name}</span>
              </>
            )}
          </div>
          <div className={`flex items-center justify-center ${r.focus ? 'border-2 border-[#808080]' : ''}`}>
            <Check on={r.on} partial={r.partial} />
          </div>
          <div className="border-x border-[#d4d4d4] flex items-center justify-center">
            <Check />
          </div>
        </div>
      ))}
      <Scroll className="left-[263px] top-[22px] h-[686px]" />
    </div>
    <div className="flex-1 flex justify-end pr-[10px] pt-[7px] bg-white">
      <div className="w-[89px] h-[18px] rounded-t-[3px] border border-[#cfcfcf] bg-white text-[12px] text-[#333] flex justify-center pt-[1px]">恢复默认设置</div>
    </div>
    <div className="absolute left-[271px] top-[240px] w-[10px] h-[59px] rounded-[2px] bg-[#3e4650] px-[2px] py-[3px]">
      <div className="h-full bg-[#2a2f35] flex flex-col justify-end items-center gap-[1px] pb-[2px]">
        {Array.from({ length: 12 }).map((_, i) => (
          <span key={i} className="block w-[4px] h-[1px] my-[0.5px] bg-[#27a5e8]" />
        ))}
      </div>
    </div>
  </aside>
);

export default function App() {
  return (
    <div className="w-[1918px] h-[825px] overflow-hidden bg-white flex flex-col font-['Noto_Sans','Noto_Sans_CJK_SC',sans-serif]">
      <div className="h-[4px] bg-[#f7f7f7] border-b border-[#9aa1a8] flex items-start pl-[2px] gap-[4px] shrink-0">
        {[0, 1, 2, 3, 4].map((i) => (
          <span key={i} className="w-[98px] h-[3px] bg-white border-x border-b border-[#d0d0d0]" />
        ))}
      </div>
      <div className="flex-1 min-h-0 flex">
        <NavPanel />
        <MiddlePanel />
        <Splitter />
        <div className="w-[998px] shrink-0 relative bg-black">
          <Scene />
          <div className="absolute left-[363px] top-[177px] text-[20.6px] leading-[24px] font-light text-[#f81c1c] whitespace-nowrap">请教一下各位专家，这种挑檐的装修工程量怎么计算，</div>
          <Toolbar />
        </div>
        <Splitter />
        <div className="w-px shrink-0 bg-white" />
        <DisplayPanel />
      </div>
    </div>
  );
}
